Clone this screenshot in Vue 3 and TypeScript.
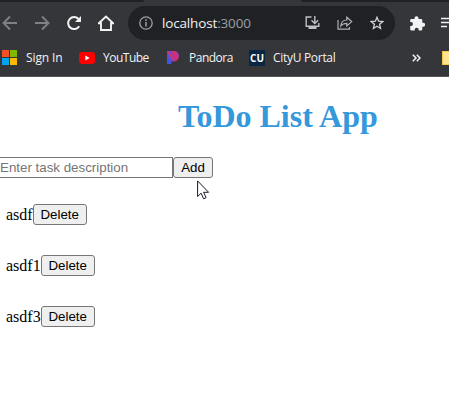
<script setup lang="ts">
import { ref } from 'vue'

interface Task {
  id: number
  description: string
}

const draft = ref('')
const tasks = ref<Task[]>([
  { id: 1, description: 'asdf' },
  { id: 2, description: 'asdf1' },
  { id: 3, description: 'asdf3' },
])

function addTask(): void {
  if (!draft.value) return
  tasks.value.push({ id: Date.now(), description: draft.value })
  draft.value = ''
}

function removeTask(id: number): void {
  tasks.value = tasks.value.filter((task) => task.id !== id)
}
</script>

<template>
  <div class="window">
    <header class="browser">
      <div class="tabs"><span class="tab-left"></span><span class="tab-active"></span><span class="tab-right"></span></div>
      <div class="toolbar">
        <svg class="nav back" width="16" height="16" viewBox="0 0 16 16"><path d="M16 8H3M9 1.500L2.500 8l6.500 6.500" fill="none" stroke="#7f8185" stroke-width="1.900" /></svg>
        <svg class="nav forward" width="16" height="16" viewBox="0 0 16 16"><path d="M0 8h13M7 1.500L13.500 8l-6.500 6.500" fill="none" stroke="#7f8185" stroke-width="1.900" /></svg>
        <svg class="nav reload" width="16" height="16" viewBox="0 0 16 16"><path d="M13.200 11.300A6 6 0 1 1 12.500 4" fill="none" stroke="#f1f3f4" stroke-width="2" /><path d="M15 1v6H9z" fill="#f1f3f4" /></svg>
        <svg class="nav home" width="16" height="16" viewBox="0 0 16 16"><path d="M.8 8.200L8 1.500l7.200 6.700H13V15H3V8.200z" fill="none" stroke="#f1f3f4" stroke-width="1.900" /></svg>
        <div class="address">
          <svg class="info" width="14" height="14" viewBox="0 0 14 14"><circle cx="7" cy="7" r="6.200" fill="none" stroke="#9aa0a6" stroke-width="1.300" /><path d="M7 6v4.500M7 3.300v1.600" stroke="#9aa0a6" stroke-width="1.500" /></svg>
          <span class="url">localhost<span class="port">:3000</span></span>
          <svg class="install" width="15" height="14" viewBox="0 0 15 14"><path d="M6.500 1H1.200v9.200h12.600V7M9.800 0v7M6.500 4.200l3.300 3.300 3.300-3.300" fill="none" stroke="#bdc1c6" stroke-width="1.400" /><path d="M3.500 10.500h8V13h-8z" fill="#bdc1c6" /></svg>
          <svg class="share" width="16" height="14" viewBox="0 0 16 14"><path d="M1 4v9.200h11.500V11M3.800 10c.3-4 2.700-6 6-6V1.200l4.900 4.400L9.800 10V7.300c-2.700 0-4.500.7-6 2.700z" fill="none" stroke="#aeb2b7" stroke-width="1.200" /></svg>
          <svg class="star" width="14" height="14" viewBox="0 0 14 14"><path d="M7 1.300l1.600 3.900 4.200.4-3.200 2.700 1 4.200L7 10.300l-3.600 2.200 1-4.200L1.200 5.600l4.200-.4z" fill="none" stroke="#d0d3d7" stroke-width="1.300" /></svg>
        </div>
        <svg class="puzzle" width="15" height="15" viewBox="0 0 15 15"><path d="M4.500 3V2.200a2 2 0 0 1 4 0V3H11a1.300 1.300 0 0 1 1.300 1.300v2.400h.8a2 2 0 0 1 0 4h-.8v2.500a1.300 1.300 0 0 1-1.300 1.300H8.700v-.8a2 2 0 0 0-4 0v.8H1.500A1.300 1.300 0 0 1 .2 13.200v-3.100H1a2 2 0 0 0 0-4H.2V4.300A1.300 1.300 0 0 1 1.500 3z" fill="#f1f3f4" /></svg>
        <svg class="queue" width="16" height="12" viewBox="0 0 16 12"><path d="M0 1.500h16M0 5.500h16M0 9.500h6" stroke="#f1f3f4" stroke-width="1.600" /></svg>
      </div>
      <nav class="bookmarks">
        <a class="bookmark sign-in"><svg width="16" height="16" viewBox="0 0 16 16"><path d="M0 0h7v7H0z" fill="#f25022" /><path d="M8 0h7v7H8z" fill="#7fba00" /><path d="M0 8h7v7H0z" fill="#00a4ef" /><path d="M8 8h7v7H8z" fill="#ffb900" /></svg><span>Sign In</span></a>
        <a class="bookmark youtube"><svg width="16" height="16" viewBox="0 0 16 16"><rect y="2" width="16" height="12" rx="3" fill="#f00" /><path d="M6.300 5.500v5l4.400-2.500z" fill="#fff" /></svg><span>YouTube</span></a>
        <a class="bookmark pandora"><svg width="16" height="16" viewBox="0 0 16 16"><defs><linearGradient id="pandora" x1="0" y1=".6" x2="1" y2=".3"><stop offset="0" stop-color="#315de0" /><stop offset=".4" stop-color="#7744cf" /><stop offset=".7" stop-color="#e52b5c" /><stop offset="1" stop-color="#933bc8" /></linearGradient></defs><path d="M2 1h6.500C12 1 14 3 14 6c0 3.500-2.500 5.500-6 5.500H6.300V14H2z" fill="url(#pandora)" /><path d="M3 2l5 7" stroke="#ee315e" stroke-width="1.500" /></svg><span>Pandora</span></a>
        <a class="bookmark cityu"><i>CU</i><span>CityU Portal</span></a>
        <svg class="more" width="9" height="8" viewBox="0 0 9 8"><path d="M.8.800L4 4 .8 7.200M4.800.800L8 4 4.800 7.200" fill="none" stroke="#f1f3f4" stroke-width="1.500" /></svg>
        <span class="divider"></span>
        <span class="folder"></span>
      </nav>
    </header>

    <main class="page">
      <h1>ToDo List App</h1>
      <form class="entry" @submit.prevent="addTask">
        <input v-model="draft" type="text" placeholder="Enter task description"><button type="submit">Add</button>
      </form>
      <ul class="tasks">
        <li v-for="task in tasks" :key="task.id">
          <span>{{ task.description }}</span><button type="button" @click="removeTask(task.id)">Delete</button>
        </li>
      </ul>
    </main>
    <svg class="cursor" width="13" height="20" viewBox="0 0 13 20"><path d="M.6.900v15.600l3.500-3.300 2.500 5.600 2.500-1.100-2.500-5.400h5z" fill="#fff" stroke="#17172b" stroke-width="1" /></svg>
  </div>
</template>

<style>
body { margin: 0; background: #fff; overflow: hidden; }
</style>

<style scoped>
.window { position: relative; width: 449px; height: 411px; overflow: hidden; background: #fff; }
.browser { box-sizing: border-box; height: 77px; overflow: hidden; background: #35363a; border-bottom: 1px solid #57555c; color: #f1f3f4; font-family: "Open Sans", "Noto Sans", sans-serif; }
.tabs { display: flex; height: 2px; }
.tab-left { width: 144px; background: #202124; border-bottom-right-radius: 2px; }
.tab-active { width: 157px; }
.tab-right { flex: 1; background: #202124; border-bottom-left-radius: 2px; }
.toolbar { display: flex; align-items: center; height: 34px; padding-top: 4px; }
svg { display: block; flex: none; }
.back { margin-left: 1px; }
.forward { margin-left: 18px; }
.reload { margin-left: 15px; }
.home { margin-left: 16px; }
.address { box-sizing: border-box; display: flex; flex: none; align-items: center; width: 267px; height: 34px; margin-left: 14px; padding-left: 11px; border-radius: 17px; background: #202124; }
.url { width: 143px; margin-left: 9px; font-size: 13.5px; line-height: 20px; letter-spacing: -0.16px; white-space: nowrap; }
.port { color: #9aa0a6; }
.share { margin-left: 17px; }
.star { margin-left: 17px; }
.puzzle { margin-left: 15px; }
.queue { margin-left: 16px; }
.bookmarks { display: flex; align-items: center; height: 36px; font-size: 12px; line-height: 16px; letter-spacing: -0.3px; }
.bookmark { display: flex; flex: none; align-items: center; white-space: nowrap; }
.bookmark svg { margin-right: 8px; }
.sign-in { width: 77px; margin-left: 2px; letter-spacing: -0.1px; }
.youtube { width: 86px; letter-spacing: -0.5px; }
.pandora { width: 84px; letter-spacing: -0.5px; }
.cityu { width: 163px; }
.cityu i { display: flex; align-items: center; justify-content: center; width: 16px; height: 16px; margin-right: 8px; background: #092742; color: #fff; font: bold 10px "Open Sans", sans-serif; letter-spacing: 0; }
.divider { width: 1px; height: 16px; margin-left: 10px; background: #6f7074; }
.folder { box-sizing: border-box; flex: none; width: 16px; height: 14px; margin-left: 11px; background: #ffe592; border: 1px solid #f2c94c; }
.page { font-family: "Liberation Serif", serif; font-size: 16px; color: #000; }
h1 { margin: 0; padding: 21px 0 0 178px; color: #3498db; font-size: 32px; line-height: 37px; white-space: nowrap; }
.entry { display: flex; margin: 22px 0 0 -3px; }
input, button { box-sizing: border-box; height: 21px; margin: 0; font: 13.333px "Liberation Sans", Arial, sans-serif; }
input { width: 176px; padding: 1px 2px; border: 1px solid #767676; border-radius: 0; background: #fff; color: #000; outline: none; }
input::placeholder { color: #757575; }
button { width: 54px; padding: 1px 6px; border: 1px solid #767676; border-radius: 3px; background: #efefef; color: #000; }
.entry button { width: 40px; }
.tasks { display: flex; flex-direction: column; gap: 30px; margin: 26px 0 0; padding: 0 0 0 6px; list-style: none; }
.tasks li { display: flex; align-items: center; height: 21px; }
.cursor { position: absolute; left: 197px; top: 180px; }
</style>
